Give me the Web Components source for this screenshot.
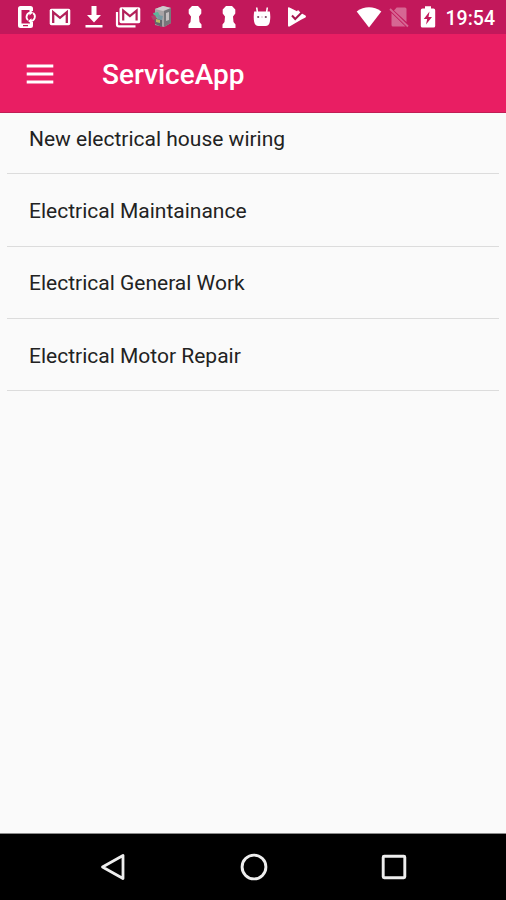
<!DOCTYPE html>
<html lang="en">
<head>
<meta charset="utf-8">
<title>ServiceApp</title>
<style>
html,body{margin:0;height:100%;background:#fafafa}
body{font-family:Roboto,"Liberation Sans",sans-serif}
</style>
</head>
<body>
<service-app></service-app>
<script>
const define = (name, html, init) => customElements.define(name, class extends HTMLElement {
  constructor() {
    super();
    this.attachShadow({ mode: 'open' }).innerHTML = html;
  }
  connectedCallback() { if (init) init(this); }
});

/* Glyphs are drawn around the centre of a 34x34 cell. */
const glyphs = {
  sync: `<path fill="#fff" fill-rule="evenodd" d="M-6.500-11H3.500Q6-11 6-8.500V-6H3V-7H-5.500V6.500H3V5H6V8.500Q6 11 3.500 11H-6.500Q-9 11-9 8.500V-8.500Q-9-11-6.500-11ZM-4 8V9.300H1V8Z"/><path fill="none" stroke="#fff" stroke-width="1.800" d="M3.500-4.300A4.300 4.300 0 0 0 1 3.200M3.500 4A4.400 4.400 0 0 0 6-4"/><path fill="#fff" d="M2.500-7.500V-1.500L6-4.400ZM4.500 1.200V7L1 4Z"/>`,
  mail: `<rect x="-10.300" y="-8.300" width="20.600" height="16.600" rx="1.800" fill="#fff"/><path fill="none" stroke="#b3205a" stroke-width="2.300" d="M-6.800 6V-4.800L0 .8L6.800-4.800V6"/>`,
  download: `<path fill="#fff" d="M-2.500-11H2.500V-2H7L0 5.500L-7-2H-2.500ZM-8.500 8H8.500V10.600H-8.500Z"/>`,
  mails: `<path fill="none" stroke="#fff" stroke-width="2.200" d="M-11-5V7.500Q-11 9.300-9.200 9.300H7.500"/><rect x="-8.500" y="-9.800" width="20.800" height="16" rx="1.700" fill="#fff"/><path fill="none" stroke="#b3205a" stroke-width="2.200" d="M-4.800 3.500V-6.300L1.900-.8L8.600-6.300V3.500"/>`,
  image: `<path fill="#a9a4a6" d="M-6-8L2-11L10-9V6L3 10L-6 8Z"/><path fill="#d1c9cc" d="M-6-8L2-11L10-9L2-6Z"/><path fill="#77777b" d="M3-6L10-9V6L3 10Z"/><path fill="#c5c0c2" d="M5-4L8-5V3L5 4Z"/><path fill="#64666d" d="M-7 0L1 3V10L-6 7Z"/><path fill="#5eb49a" d="M-8-4L-3-5L-1-1L-6 1Z"/><path fill="#7999a4" d="M-3-2L2-1L1 3L-4 2Z"/><path fill="#b2406a" d="M-10-1L-6-2L-4 2L-8 3Z"/><path fill="#b9bd68" d="M-5 2L-1 3L-1 6L-5 5Z"/>`,
  keyhole: `<path fill="#fff" d="M-3-11H3L6.300-7.500V-3.500L4-.5L4.500 5L6.500 7.500V11H-6.500V7.500L-4.500 5L-4-.5L-6.300-3.500V-7.500Z"/>`,
  droid: `<path fill="#fff" d="M-7.800-5.500H7.800Q8.800 0 7.800 5Q7 9 3.500 9H-3.500Q-7 9-7.800 5Q-8.800 0-7.800-5.500Z"/><path stroke="#fff" stroke-width="1.600" d="M-4.500-4L-5.300-9.500M4.500-4L5.300-9.500"/><circle cx="-3.800" cy="0" r="1.100" fill="#7b4360"/><circle cx="3.800" cy="0" r="1.100" fill="#7b4360"/><path stroke="#d9bcc9" d="M-1 0H1"/>`,
  play: `<path fill="#fff" d="M-8-9Q-8-10.300-6.500-9.500L1-5.800L2-7L5-4L9.500-1.500Q10.500-.5 9.500.5L5.500 2.600L-6.500 9.500Q-8 10-8 8.500Z"/><path fill="none" stroke="#a61750" stroke-width="2" d="M-4-1.500L-.8 2L5.500-4.300"/>`,
  wifi: `<path fill="#fff" d="M0 10.500L-12.300-5.500Q-6.500-9.700 0-9.700T12.300-5.500Z"/>`,
  nosim: `<g opacity=".34"><path fill="#fff" d="M-2.300-9.500H6Q7.500-9.500 7.500-8V5L-5-6.500ZM-7.500-4L6.500 9.500H-6Q-7.500 9.500-7.500 8Z"/><path stroke="#fff" stroke-width="1.800" d="M-9-8L9 9.500"/></g>`,
  battery: `<path fill="#fff" fill-rule="evenodd" d="M-3-10.700H3V-8.400H5.500Q7.200-8.400 7.200-6.800V9Q7.200 10.600 5.500 10.600H-5.500Q-7.200 10.600-7.200 9V-6.800Q-7.200-8.400-5.500-8.400H-3ZM1.500-5.500L-4.200 2H-.8L-2 7.500L4 0H.5Z"/>`,
  menu: `<path fill="#fff" d="M-13.300-9.500H13.300V-6.500H-13.300ZM-13.300-1.500H13.300V1.500H-13.300ZM-13.300 6.500H13.300V9.500H-13.300Z"/>`,
  back: `<path fill="none" stroke="#eee" stroke-width="2.800" stroke-linejoin="round" d="M10-11.500V11.500L-10.500 0Z"/>`,
  home: `<circle r="11.900" fill="none" stroke="#eee" stroke-width="2.900"/>`,
  recent: `<rect x="-10.800" y="-10.800" width="21.600" height="21.600" rx="1" fill="none" stroke="#eee" stroke-width="2.900"/>`
};

define('app-icon', `<style>:host{display:flex;justify-content:center;flex:none;width:34px;height:34px}svg{display:block;flex:none}</style><svg width="34" height="34" viewBox="-17 -17 34 34" aria-hidden="true"></svg>`,
  el => { el.shadowRoot.querySelector('svg').innerHTML = glyphs[el.getAttribute('name')]; });

define('status-bar', `<style>
:host{display:flex;justify-content:space-between;height:34px;background:#c2185b;color:#fff;padding:0 11px 0 10px}
.side{display:flex;align-items:center}
.notes app-icon{width:33.65px}
.sys app-icon{width:29.600px}
.time{font:500 19.500px/34px Roboto,sans-serif;padding-top:3px;margin-left:2.500px}
</style>
<div class="side notes"><app-icon name="sync"></app-icon><app-icon name="mail"></app-icon><app-icon name="download"></app-icon><app-icon name="mails"></app-icon><app-icon name="image"></app-icon><app-icon name="keyhole"></app-icon><app-icon name="keyhole"></app-icon><app-icon name="droid"></app-icon><app-icon name="play"></app-icon></div>
<div class="side sys"><app-icon name="wifi"></app-icon><app-icon name="nosim"></app-icon><app-icon name="battery"></app-icon><span class="time"><slot></slot></span></div>`);

define('app-bar', `<style>
:host{display:flex;align-items:center;box-sizing:border-box;height:79px;background:#e91e63;border-bottom:1px solid #c01d55;color:#fff;padding:1px 23px 0}
h1{margin:3px 0 0 45px;font:500 28px/34px Roboto,sans-serif}
</style><app-icon name="menu"></app-icon><h1><slot></slot></h1>`);

define('service-list', `<style>:host{display:block;flex:1;padding:0 7px;overflow:hidden;margin-top:-11px;clip-path:inset(11px 0 0)}</style><slot></slot>`);

define('service-row', `<style>
:host{display:flex;align-items:center;box-sizing:border-box;height:72.35px;padding:2px 22px 0;border-bottom:1px solid #dcdcdc;color:#222;font:400 21px/30px Roboto,sans-serif}
</style><span><slot></slot></span>`);

define('nav-bar', `<style>
:host{display:flex;justify-content:center;gap:106.500px;box-sizing:border-box;height:67px;background:#000;border-top:1px solid #8c8c8c;padding:16px 0 0 1px}
</style><app-icon name="back"></app-icon><app-icon name="home"></app-icon><app-icon name="recent"></app-icon>`);

define('service-app', `<style>:host{display:flex;flex-direction:column;width:506px;height:900px;background:#fafafa;overflow:hidden}</style>
<status-bar>19:54</status-bar>
<app-bar>ServiceApp</app-bar>
<service-list>
<service-row>New electrical house wiring</service-row>
<service-row>Electrical Maintainance</service-row>
<service-row>Electrical General Work</service-row>
<service-row>Electrical Motor Repair</service-row>
</service-list>
<nav-bar></nav-bar>`);
</script>
</body>
</html>
